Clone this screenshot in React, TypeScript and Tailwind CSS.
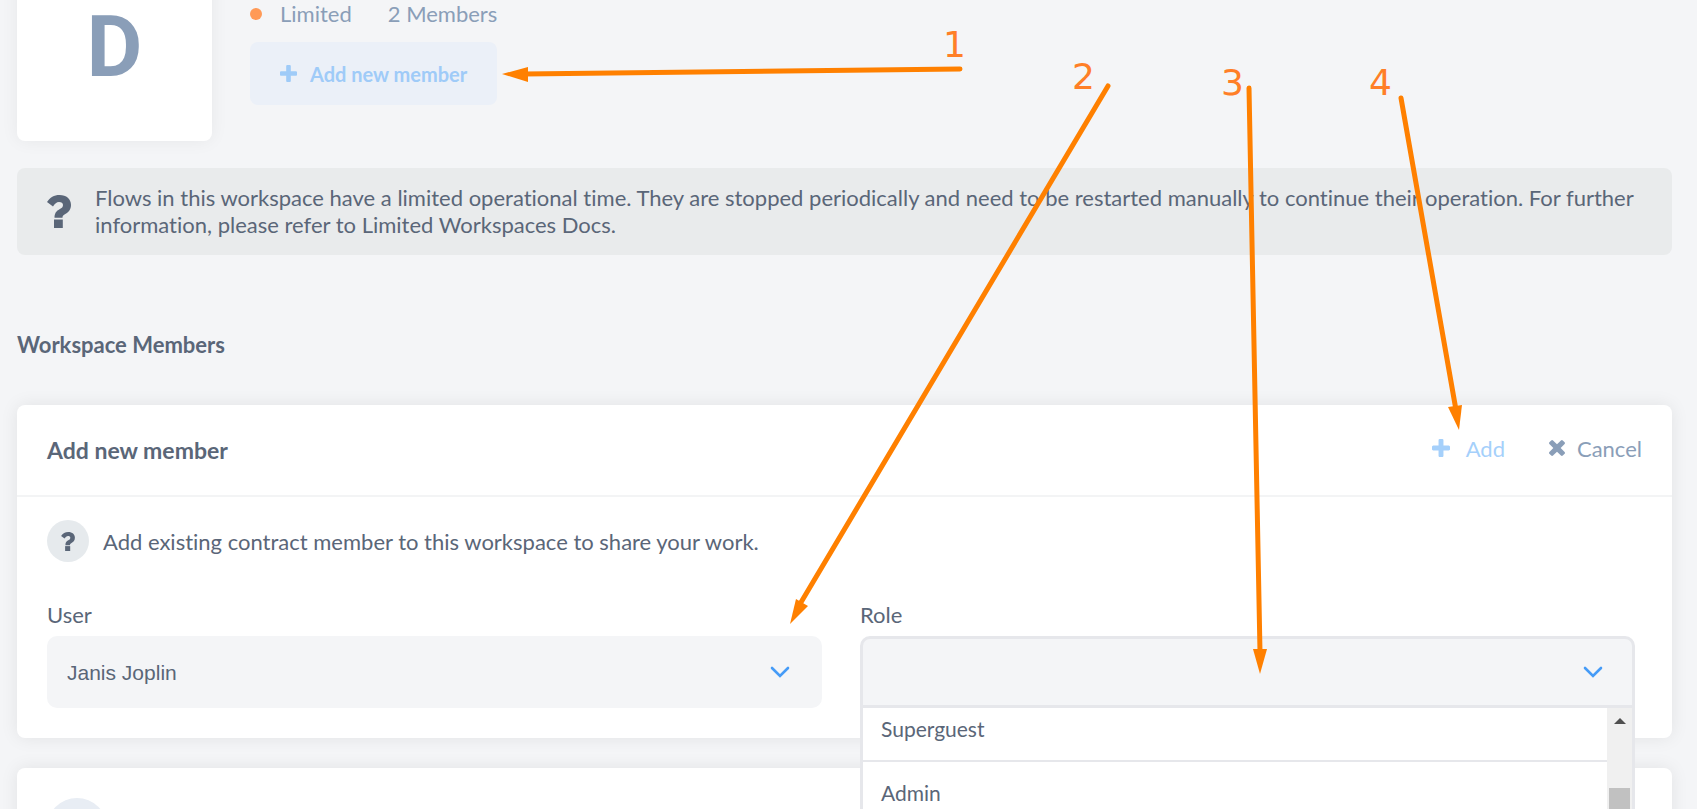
import type { ReactNode } from 'react'

const ORANGE = '#ff8000'

function PlusIcon({ className }: { className: string }) {
  return (
    <svg viewBox="192 128 1408 1408" fill="currentColor" aria-hidden="true" className={className}>
      <path d="M1600 736v192q0 40-28 68t-68 28h-416v416q0 40-28 68t-68 28h-192q-40 0-68-28t-28-68v-416h-416q-40 0-68-28t-28-68v-192q0-40 28-68t68-28h416v-416q0-40 28-68t68-28h192q40 0 68 28t28 68v416h416q40 0 68 28t28 68z" />
    </svg>
  )
}

function TimesIcon({ className }: { className: string }) {
  return (
    <svg viewBox="302 366 1188 1188" fill="currentColor" aria-hidden="true" className={className}>
      <path d="M1490 1322q0 40-28 68l-136 136q-28 28-68 28t-68-28l-294-294-294 294q-28 28-68 28t-68-28l-136-136q-28-28-28-68t28-68l294-294-294-294q-28-28-28-68t28-68l136-136q28-28 68-28t68 28l294 294 294-294q28-28 68-28t68 28l136 136q28 28 28 68t-28 68l-294 294 294 294q28 28 28 68z" />
    </svg>
  )
}

function QuestionIcon({ className }: { className: string }) {
  return (
    <svg viewBox="0 0 24 33" fill="currentColor" aria-hidden="true" className={className}>
      <path d="M0 7C3 2.500 7 0 12.500 0C19.500 0 24 4 24 10C24 15 21 17.500 17.500 19.500C15.800 20.500 15.500 21.200 15.500 22.800H7.500C7.500 18 9.500 16 12.500 14.300C15 13 16 12 16 10C16 8 14.500 7 12 7C9.500 7 8 8.500 6 11.500Z" />
      <rect x="7" y="24.500" width="8.800" height="8.500" />
    </svg>
  )
}

function ChevronIcon() {
  return (
    <svg
      viewBox="0 0 20 12"
      fill="none"
      stroke="#459bf7"
      strokeWidth="2.600"
      strokeLinecap="round"
      aria-hidden="true"
      className="pointer-events-none col-start-1 row-start-1 mr-8 h-3 w-5 self-center justify-self-end"
    >
      <path d="M2 2l8 8 8-8" />
    </svg>
  )
}

function Card({ children }: { children: ReactNode }) {
  return <section className="rounded-lg bg-white shadow-[0_0_18px_rgba(0,0,0,0.08)]">{children}</section>
}

const roles = ['Superguest', 'Admin', 'Member']

const arrows = [
  { from: [960, 69], to: [524, 74], head: '502,74 528,67 528,82' },
  { from: [1108, 86], to: [800, 604], head: '790,624 796,599 808,606' },
  { from: [1249, 88], to: [1260, 652], head: '1260,674 1253,649 1267,649' },
  { from: [1401, 98], to: [1456, 410], head: '1459,430 1448,407 1462,405' },
]

const numbers = [
  { label: '1', x: 943, y: 57 },
  { label: '2', x: 1072, y: 89 },
  { label: '3', x: 1221, y: 95 },
  { label: '4', x: 1369, y: 95 },
]

function Annotations() {
  return (
    <svg aria-hidden="true" width="1697" height="809" className="pointer-events-none absolute top-0 left-0 z-20">
      {arrows.map((a) => (
        <g key={a.head} fill={ORANGE} stroke={ORANGE}>
          <line x1={a.from[0]} y1={a.from[1]} x2={a.to[0]} y2={a.to[1]} strokeWidth="5" strokeLinecap="round" />
          <polygon points={a.head} stroke="none" />
        </g>
      ))}
      {numbers.map((n) => (
        <text key={n.label} x={n.x} y={n.y} fill="#ff7f27" fontSize="36" fontFamily="'DejaVu Sans', sans-serif">
          {n.label}
        </text>
      ))}
    </svg>
  )
}

export default function App() {
  return (
    <div className="relative h-screen overflow-hidden bg-[#f4f5f7] pr-[25px] pl-[17px] font-['Lato',sans-serif] text-[22px] leading-[27px] text-[#5a6678] [font-variant-ligatures:none]">
      <header className="-mt-[54px] flex gap-[38px]">
        <div className="flex size-[195px] shrink-0 items-center justify-center rounded-lg bg-white pt-[6px] font-['Roboto',sans-serif] text-[86px] leading-none font-bold text-[#8a9eb8] shadow-[0_0_18px_rgba(0,0,0,0.06)]">
          D
        </div>
        <div className="flex flex-col items-start justify-end gap-[15px] pb-9">
          <div className="flex items-center text-[#8a9eb8]">
            <span className="mr-[18px] size-3 rounded-full bg-[#ff9a57]" />
            <span className="mr-9">Limited</span>
            <span>2 Members</span>
          </div>
          <button type="button" className="flex h-[63px] items-center gap-[13px] rounded-lg bg-[#ebf0f8] px-[30px] text-xl font-bold text-[#9fcbf8]">
            <PlusIcon className="size-[17px]" />
            Add new member
          </button>
        </div>
      </header>

      <aside className="mt-[27px] flex items-center gap-6 rounded-lg bg-[#e9ebec] px-[30px] pt-4 pb-[17px]">
        <QuestionIcon className="h-[33px] w-6 shrink-0" />
        <p>
          Flows in this workspace have a limited operational time. They are stopped periodically and need to be restarted manually to continue their operation. For further
          information, please refer to Limited Workspaces Docs.
        </p>
      </aside>

      <main>
        <h1 className="mt-[76px] mb-[47px] font-bold">Workspace Members</h1>
        <div className="flex flex-col gap-[30px]">
          <Card>
            <div className="flex h-[92px] items-center justify-between border-b-2 border-[#f3f4f5] px-[30px]">
              <h2 className="text-[23px] font-bold">Add new member</h2>
              <div className="flex items-center gap-11 pb-1">
                <button type="button" className="flex items-center gap-4 text-[#a5d0fb]">
                  <PlusIcon className="size-[18px]" />
                  Add
                </button>
                <button type="button" className="flex items-center gap-3 text-[#8a9eb8]">
                  <TimesIcon className="size-4" />
                  Cancel
                </button>
              </div>
            </div>
            <div className="px-[30px] pt-[23px] pb-[30px]">
              <p className="flex items-center gap-[14px]">
                <span className="flex size-[42px] items-center justify-center rounded-full bg-[#e6eaed]">
                  <QuestionIcon className="h-[19px] w-[14px]" />
                </span>
                Add existing contract member to this workspace to share your work.
              </p>
              <div className="mt-[39px] mr-[7px] grid grid-cols-2 gap-[38px]">
                <div>
                  <label htmlFor="user" className="mb-2 block">
                    User
                  </label>
                  <div className="grid">
                    <select
                      id="user"
                      className="col-start-1 row-start-1 h-[72px] appearance-none rounded-[10px] bg-[#f4f5f7] px-5 font-['Liberation_Sans',sans-serif] text-[21px]"
                    >
                      <option>Janis Joplin</option>
                    </select>
                    <ChevronIcon />
                  </div>
                </div>
                <div className="relative">
                  <label htmlFor="role" className="mb-2 block">
                    Role
                  </label>
                  <div className="grid">
                    <select
                      id="role"
                      defaultValue=""
                      className="col-start-1 row-start-1 h-[72px] appearance-none rounded-t-[10px] border-[3px] border-[#e6e7eb] bg-[#f4f5f7] px-5 text-[21px]"
                    >
                      <option value="" />
                      {roles.map((r) => (
                        <option key={r}>{r}</option>
                      ))}
                    </select>
                    <ChevronIcon />
                  </div>
                  <div className="absolute inset-x-0 top-full z-10 flex h-44 overflow-hidden border-x-[3px] border-b-[3px] border-[#e6e7eb] bg-white">
                    <ul role="listbox" aria-label="Role" className="-mt-[10px] flex-1 text-[21px]">
                      {roles.map((r) => (
                        <li key={r} role="option" aria-selected="false" className="flex h-16 items-center border-b-2 border-[#e6e7eb] px-[18px] pb-[2px]">
                          {r}
                        </li>
                      ))}
                    </ul>
                    <div className="flex w-[25px] flex-col items-center bg-[#f0f0f0] pt-[10px]">
                      <svg viewBox="0 0 12 6" aria-hidden="true" className="h-[6px] w-3">
                        <path d="M0 6L6 0L12 6Z" fill="#505050" />
                      </svg>
                      <div className="mt-16 h-20 w-[21px] bg-[#c1c1c1]" />
                    </div>
                  </div>
                </div>
              </div>
            </div>
          </Card>
          <Card>
            <div className="px-[30px] py-[30px]">
              <div className="size-[60px] rounded-full bg-[#e8edf4]" />
            </div>
          </Card>
        </div>
      </main>

      <Annotations />
    </div>
  )
}
